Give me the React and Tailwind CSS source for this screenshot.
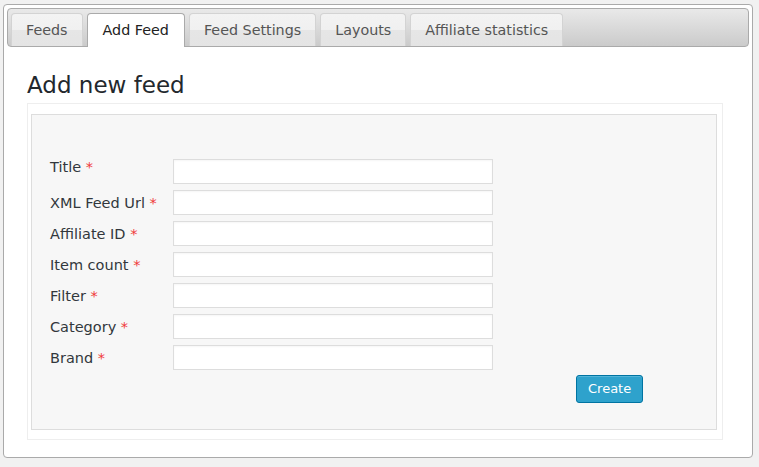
export default function App() {
  const tabs = ["Feeds", "Add Feed", "Feed Settings", "Layouts", "Affiliate statistics"];
  const fields = ["Title", "XML Feed Url", "Affiliate ID", "Item count", "Filter", "Category", "Brand"];
  return (
    <div className="min-h-[467px] w-[759px] bg-[#f1f1f1] pt-[4px] pl-[3px] font-['DejaVu_Sans',Verdana,sans-serif]">
      <div className="w-[750px] h-[454px] border border-[#aaaaaa] rounded-[4px] bg-white p-[3px]">
        <div className="h-[39px] border border-[#aaaaaa] rounded-[4px] bg-gradient-to-b from-[#e9e9e9] to-[#cbcbcb] pt-[4px] pl-[3px] flex items-start gap-[4px]">
          {tabs.map((t) =>
            t === "Add Feed" ? (
              <div
                key={t}
                className="relative h-[34px] mb-[-1px] pt-[1px] px-[15px] flex items-center bg-white border border-b-0 border-[#aaaaaa] rounded-t-[4px] text-[14.3px] text-[#222222]"
              >
                {t}
              </div>
            ) : (
              <div
                key={t}
                className="h-[33px] pt-[2px] px-[14px] flex items-center border border-b-0 border-[#d3d3d3] rounded-t-[4px] bg-[linear-gradient(to_bottom,#f3f3f3_0%,#f0f0f0_50%,#e6e6e6_51%,#e4e4e4_100%)] text-[14.3px] text-[#555555]"
              >
                {t}
              </div>
            )
          )}
        </div>
        <div className="pl-[20px] pt-[23px]">
          <h1 className="text-[23px] leading-[30px] text-[#23282d] font-normal mb-[3px]">Add new feed</h1>
          <div className="w-[696px] h-[337px] border border-[#eeeeee] pt-[10px] pl-[3px]">
            <div className="w-[686px] h-[316px] border border-[#dddddd] bg-[#f7f7f7] pt-[44px] pl-[18px]">
              <div className="flex flex-col gap-[6px]">
                {fields.map((f, i) => (
                  <div key={f} className="flex items-center h-[25px]">
                    <div
                      className={
                        i === 0
                          ? "w-[123px] -mt-[9px] text-[14.5px] leading-[20px] text-[#32373c]"
                          : "w-[123px] text-[14.5px] leading-[20px] text-[#32373c]"
                      }
                    >
                      {f} <span className="text-[#f03a3a]">*</span>
                    </div>
                    <div className="w-[320px] h-[25px] border border-[#dddddd] bg-white shadow-[inset_0_1px_2px_rgba(0,0,0,0.04)]" />
                  </div>
                ))}
              </div>
              <div className="mt-[5px] pl-[526px]">
                <button className="h-[28px] px-[11px] border border-[#0074a2] rounded-[3px] bg-[#2ea2cc] text-white text-[13px] leading-[26px] shadow-[inset_0_1px_0_rgba(120,200,230,0.5)]">
                  Create
                </button>
              </div>
            </div>
          </div>
        </div>
      </div>
    </div>
  );
}
